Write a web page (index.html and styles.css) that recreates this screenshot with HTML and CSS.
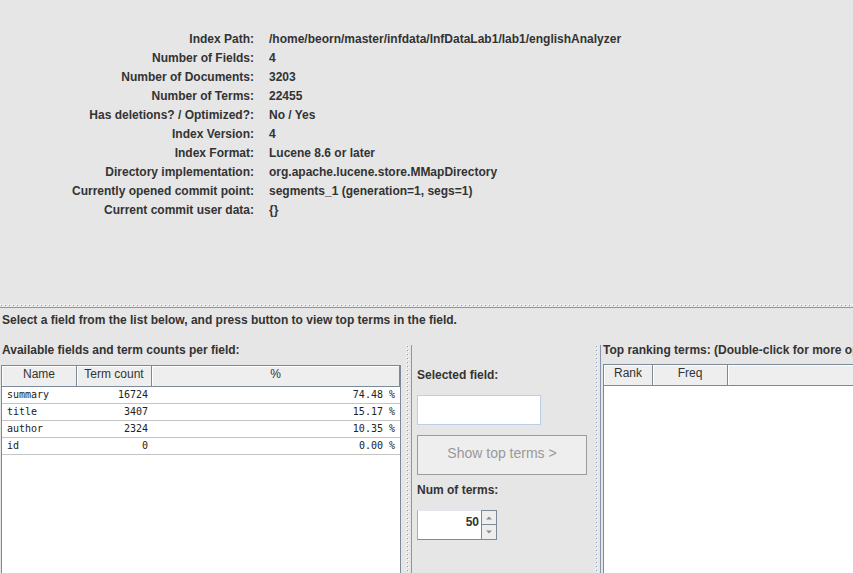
FILE: index.html
```html
<!DOCTYPE html>
<html>
<head>
<meta charset="utf-8">
<link rel="stylesheet" href="styles.css">
</head>
<body>
<div class="app">
  <div class="info">
    <div class="k">Index Path:</div><div class="v">/home/beorn/master/infdata/InfDataLab1/lab1/englishAnalyzer</div>
    <div class="k">Number of Fields:</div><div class="v">4</div>
    <div class="k">Number of Documents:</div><div class="v">3203</div>
    <div class="k">Number of Terms:</div><div class="v">22455</div>
    <div class="k">Has deletions? / Optimized?:</div><div class="v">No / Yes</div>
    <div class="k">Index Version:</div><div class="v">4</div>
    <div class="k">Index Format:</div><div class="v">Lucene 8.6 or later</div>
    <div class="k">Directory implementation:</div><div class="v">org.apache.lucene.store.MMapDirectory</div>
    <div class="k">Currently opened commit point:</div><div class="v">segments_1 (generation=1, segs=1)</div>
    <div class="k">Current commit user data:</div><div class="v">{}</div>
  </div>
  <div class="hsplit">
    <svg class="bumps-h" width="853" height="3">
      <defs>
        <pattern id="bh" width="4" height="4" patternUnits="userSpaceOnUse">
          <rect x="0" y="0" width="1" height="1" fill="#ffffff"/>
          <rect x="1" y="1" width="1" height="1" fill="#8a9db5"/>
          <rect x="2" y="2" width="1" height="1" fill="#ffffff"/>
          <rect x="3" y="3" width="1" height="1" fill="#8a9db5"/>
        </pattern>
      </defs>
      <rect width="853" height="3" fill="url(#bh)"/>
    </svg>
  </div>
  <div class="lower">
    <div class="hint">Select a field from the list below, and press button to view top terms in the field.</div>
    <div class="split">
      <div class="pane-left">
        <div class="cap">Available fields and term counts per field:</div>
        <div class="table">
          <div class="thead">
            <div class="th c1">Name</div>
            <div class="th c2">Term count</div>
            <div class="th c3">%</div>
          </div>
          <div class="tr"><div class="td c1">summary</div><div class="td c2 num">16724</div><div class="td c3 num">74.48 %</div></div>
          <div class="tr"><div class="td c1">title</div><div class="td c2 num">3407</div><div class="td c3 num">15.17 %</div></div>
          <div class="tr"><div class="td c1">author</div><div class="td c2 num">2324</div><div class="td c3 num">10.35 %</div></div>
          <div class="tr"><div class="td c1">id</div><div class="td c2 num">0</div><div class="td c3 num">0.00 %</div></div>
        </div>
      </div>
      <div class="vdiv">
        <svg class="bumps-v" width="3" height="300">
          <defs>
            <pattern id="bv" width="4" height="4" patternUnits="userSpaceOnUse">
              <rect x="0" y="0" width="1" height="1" fill="#ffffff"/>
              <rect x="1" y="1" width="1" height="1" fill="#8a9db5"/>
              <rect x="2" y="2" width="1" height="1" fill="#ffffff"/>
              <rect x="3" y="3" width="1" height="1" fill="#8a9db5"/>
            </pattern>
          </defs>
          <rect width="3" height="300" fill="url(#bv)"/>
        </svg>
      </div>
      <div class="pane-mid">
        <div class="lbl lbl1">Selected field:</div>
        <div class="field"></div>
        <div class="btn">Show top terms &gt;</div>
        <div class="lbl lbl2">Num of terms:</div>
        <div class="spinner">
          <div class="spin-field">50</div>
          <div class="spin-btns">
            <div class="spin-btn">
              <svg width="6" height="4" viewBox="0 0 6 4"><path d="M0 3.5 L3 0.5 L6 3.5 Z" fill="#7f8fa0"/></svg>
            </div>
            <div class="spin-btn">
              <svg width="6" height="4" viewBox="0 0 6 4"><path d="M0 0.5 L3 3.5 L6 0.5 Z" fill="#7f8fa0"/></svg>
            </div>
          </div>
        </div>
      </div>
      <div class="vdiv">
        <svg class="bumps-v" width="3" height="300">
          <rect width="3" height="300" fill="url(#bv)"/>
        </svg>
      </div>
      <div class="pane-right">
        <div class="cap">Top ranking terms: (Double-click for more options.)</div>
        <div class="table table-r">
          <div class="thead">
            <div class="th r1">Rank</div>
            <div class="th r2">Freq</div>
            <div class="th r3"></div>
          </div>
        </div>
      </div>
    </div>
  </div>
</div>
</body>
</html>
```

FILE: styles.css
```css
* { box-sizing: border-box; }
html, body {
  margin: 0;
  padding: 0;
  background: #e6e6e6;
}
body {
  font-family: "Liberation Sans", Arial, sans-serif;
  font-size: 12px;
  color: #333333;
}
.app {
  width: 853px;
  height: 573px;
  overflow: hidden;
  display: flex;
  flex-direction: column;
}
.info {
  height: 303px;
  flex: none;
  padding-top: 30px;
  display: grid;
  grid-template-columns: 254px 1fr;
  grid-auto-rows: 19px;
  column-gap: 15px;
  font-weight: bold;
  line-height: 19px;
  white-space: nowrap;
}
.info .k { text-align: right; }
.hsplit {
  height: 5px;
  flex: none;
  padding-top: 1px;
  border-bottom: 1px solid #8797ab;
}
.bumps-h, .bumps-v { display: block; }
.lower {
  flex: 1;
  display: flex;
  flex-direction: column;
  min-height: 0;
}
.hint {
  font-weight: bold;
  line-height: 16px;
  margin-top: 4px;
  margin-bottom: 17px;
  padding-left: 2px;
  white-space: nowrap;
}
.split {
  flex: 1;
  display: flex;
  min-height: 0;
}
.cap {
  font-weight: bold;
  line-height: 10px;
  white-space: nowrap;
}
.pane-left {
  width: 401px;
  flex: none;
  padding-left: 1px;
}
.pane-left .cap { padding-left: 1px; }
.table {
  margin-top: 10px;
  width: 400px;
  height: 300px;
  background: #ffffff;
  border: 1px solid #7a8a99;
}
.thead {
  display: flex;
  height: 21px;
  background: #eeeeee;
  border-bottom: 1px solid #7a8a99;
}
.th {
  height: 20px;
  line-height: 17px;
  text-align: center;
  border-right: 1px solid #7a8a99;
  box-shadow: inset 1px 1px 0 #ffffff;
  white-space: nowrap;
}
.c1 { width: 75px; }
.c2 { width: 75px; }
.c3 { width: 248px; }
.tr {
  display: flex;
  height: 17px;
  border-bottom: 1px solid #c4c4c4;
  font-family: "DejaVu Sans Mono", "Liberation Mono", monospace;
  font-size: 10px;
  line-height: 15px;
  color: #222222;
}
.td { white-space: nowrap; }
.td.c1 { padding-left: 5px; }
.td.c2 { padding-right: 4px; }
.td.c3 { padding-right: 5px; }
.num { text-align: right; }
.vdiv {
  width: 10px;
  flex: none;
  padding-left: 5px;
  overflow: hidden;
}
.pane-mid {
  width: 179px;
  flex: none;
  border-left: 1px solid #8797ab;
  padding: 0 3px 0 5px;
  display: flex;
  flex-direction: column;
  align-items: flex-start;
}
.lbl {
  font-weight: bold;
  line-height: 16px;
  white-space: nowrap;
}
.lbl1 { margin-top: 22px; }
.field {
  margin-top: 12px;
  width: 124px;
  height: 30px;
  background: #ffffff;
  border: 1px solid #b8cfe5;
}
.btn {
  margin-top: 10px;
  width: 170px;
  height: 40px;
  background: #eeeeee;
  border: 1px solid #9c9c9c;
  color: #999999;
  font-size: 14px;
  line-height: 34px;
  text-align: center;
  white-space: nowrap;
}
.lbl2 { margin-top: 7px; }
.spinner {
  margin-top: 12px;
  display: flex;
  height: 30px;
}
.spin-field {
  width: 64px;
  height: 30px;
  background: #ffffff;
  border-left: 1px solid #a6b0bb;
  border-bottom: 1px solid #7a8a99;
  border-top: 1px solid #e0e6ec;
  text-align: right;
  padding-right: 2px;
  font-weight: bold;
  line-height: 22px;
}
.spin-btns {
  display: flex;
  flex-direction: column;
  width: 16px;
}
.spin-btn {
  height: 15px;
  background: #eeeeee;
  border: 1px solid #7a8a99;
  display: flex;
  align-items: center;
  justify-content: center;
}
.spin-btn + .spin-btn { border-top: none; height: 15px; }
.spin-btn svg { display: block; }
.pane-right {
  flex: 1;
  min-width: 0;
  border-left: 1px solid #8797ab;
  padding-left: 2px;
  overflow: hidden;
}
.table-r {
  margin-top: 9px;
  width: 400px;
  border-right: none;
}
.r1 { width: 49px; }
.r2 { width: 75px; }
.r3 { width: 274px; }
```
